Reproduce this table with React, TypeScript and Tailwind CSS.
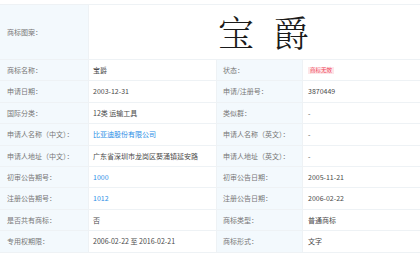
import React from "react";

type Cell = { label: string; value: React.ReactNode };

const rows: [Cell, Cell][] = [
  [
    { label: "商标名称：", value: "宝爵" },
    {
      label: "状态：",
      value: (
        <span className="inline-block bg-[#fde6e8] px-[2px] text-[5.5px] leading-[7px] text-[#f0435a]">商标无效</span>
      ),
    },
  ],
  [
    { label: "申请日期：", value: "2003-12-31" },
    { label: "申请/注册号：", value: "3870449" },
  ],
  [
    { label: "国际分类：", value: "12类 运输工具" },
    { label: "类似群：", value: "-" },
  ],
  [
    { label: "申请人名称（中文）：", value: <span className="text-[#2a8ee6]">比亚迪股份有限公司</span> },
    { label: "申请人名称（英文）：", value: "-" },
  ],
  [
    { label: "申请人地址（中文）：", value: "广东省深圳市龙岗区葵涌镇延安路" },
    { label: "申请人地址（英文）：", value: "-" },
  ],
  [
    { label: "初审公告期号：", value: <span className="text-[#2a8ee6]">1000</span> },
    { label: "初审公告日期：", value: "2005-11-21" },
  ],
  [
    { label: "注册公告期号：", value: <span className="text-[#2a8ee6]">1012</span> },
    { label: "注册公告日期：", value: "2006-02-22" },
  ],
  [
    { label: "是否共有商标：", value: "否" },
    { label: "商标类型：", value: "普通商标" },
  ],
  [
    { label: "专用权期限：", value: "2006-02-22 至 2016-02-21" },
    { label: "商标形式：", value: "文字" },
  ],
];

const font = { fontFamily: '"Noto Sans CJK SC", "Noto Sans", sans-serif' };

export default function App() {
  return (
    <div className="h-[255px] w-[420px] overflow-hidden bg-white" style={font}>
      <div className="mt-[4px] grid grid-cols-[88px_127px_85px_117px] grid-rows-[54px] auto-rows-[20.4px] gap-px border-y border-[#eef2f5] bg-[#eef2f5]">
        <div className="flex items-center bg-[#f3f9fd] px-[7px] text-[7px] text-[#777]">商标图案：</div>
        <div className="col-span-3 flex items-center bg-white pl-[129px]">
          <div
            className="flex gap-[19px] text-[36px] leading-none text-[#1a1a1a]"
            style={{ fontFamily: '"Noto Serif CJK SC", "Noto Sans CJK SC", serif', fontWeight: 300 }}
          >
            <span>宝</span>
            <span>爵</span>
          </div>
        </div>
        {rows.map(([a, b], i) => (
          <React.Fragment key={i}>
            <div className="flex items-center whitespace-nowrap bg-[#f3f9fd] px-[7px] text-[7px] text-[#777]">{a.label}</div>
            <div className="flex items-center whitespace-nowrap bg-white px-[4px] text-[7px] text-[#4a4a4a]">{a.value}</div>
            <div className="flex items-center whitespace-nowrap bg-[#f3f9fd] px-[6px] text-[7px] text-[#777]">{b.label}</div>
            <div className="flex items-center whitespace-nowrap bg-white px-[5px] text-[7px] text-[#4a4a4a]">{b.value}</div>
          </React.Fragment>
        ))}
      </div>
    </div>
  );
}
